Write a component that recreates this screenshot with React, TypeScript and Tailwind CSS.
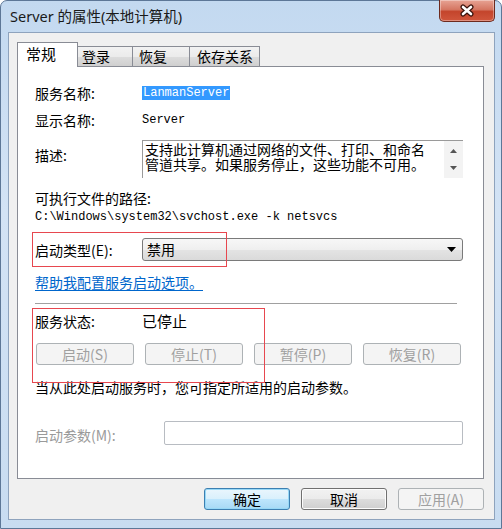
import type { ReactNode } from "react";

function DisabledButton({ children }: { children: ReactNode }) {
  return (
    <div className="flex h-[22px] items-center justify-center rounded-[3px] border border-[#adb2b5] bg-[#f4f4f4] text-[14px] leading-none text-[#a0a0a0]">
      {children}
    </div>
  );
}

function Row({ label, children, labelClass = "" }: { label: string; children: ReactNode; labelClass?: string }) {
  return (
    <div className="flex h-[16px] items-center">
      <div className={`w-[107px] shrink-0 text-[14px] leading-[16px] ${labelClass}`}>{label}</div>
      {children}
    </div>
  );
}

export default function App() {
  return (
    <div className="flex h-[529px] w-[502px] flex-col rounded-t-[7px] border border-[#5d7797] bg-[linear-gradient(#c3d9f0,#d3e3f5_40%,#c8dcf1)] pb-[8px] pl-[7px] pr-[6px] font-['Noto_Sans','Noto_Sans_CJK_SC',sans-serif] text-black">
      {/* title bar */}
      <div className="flex h-[31px] shrink-0 items-start justify-between">
        <div className="ml-[2px] mt-[6px] text-[14.5px] leading-[18px] text-[#1a1a1a]">Server 的属性(本地计算机)</div>
        <div className="-mt-px flex h-[22px] w-[56px] items-center justify-center rounded-b-[5px] border border-t-0 border-[#6d2a1e] bg-[linear-gradient(#e7a394,#d57763_45%,#c4452c_55%,#d0563c)] shadow-[inset_0_0_0_1px_rgba(255,255,255,0.35)]">
          <svg width="18" height="13" viewBox="0 0 18 13">
            <path d="M5 3 L13 10 M13 3 L5 10" stroke="#3b130c" strokeWidth="5" strokeLinecap="round" />
            <path d="M5 3 L13 10 M13 3 L5 10" stroke="#ffffff" strokeWidth="2.6" strokeLinecap="round" />
          </svg>
        </div>
      </div>

      {/* client area */}
      <div className="flex flex-1 flex-col border border-[#8ea3bd] bg-[#f0f0f0] pl-[8px] pr-[10px] pt-[9px] font-['Noto_Sans_CJK_SC',sans-serif]">
        {/* tabs */}
        <div className="relative z-10 -mb-px flex h-[25px] items-end text-[14px]">
          <div className="flex h-[25px] w-[61px] items-center border border-b-0 border-[#898c95] bg-white pb-[2px] pl-[8px] text-[15px]">常规</div>
          <div className="flex h-[21px] w-[55px] items-center border border-l-0 border-[#898c95] bg-[linear-gradient(#f2f2f2,#ebebeb_50%,#dddddd_50%,#cfcfcf)] pl-[4px]">登录</div>
          <div className="flex h-[21px] w-[57px] items-center border border-l-0 border-[#898c95] bg-[linear-gradient(#f2f2f2,#ebebeb_50%,#dddddd_50%,#cfcfcf)] pl-[6px]">恢复</div>
          <div className="flex h-[21px] w-[70px] items-center border border-l-0 border-[#898c95] bg-[linear-gradient(#f2f2f2,#ebebeb_50%,#dddddd_50%,#cfcfcf)] pl-[7px]">依存关系</div>
        </div>

        {/* panel */}
        <div className="relative flex h-[413px] flex-col border border-[#898c95] bg-white pl-[17px] pr-[20px] pt-[18px]">
          <Row label="服务名称:">
            <span className="bg-[#3399ff] px-px font-['Liberation_Mono',monospace] text-[12px] leading-[14px] text-white">LanmanServer</span>
          </Row>
          <div className="mt-[11px]">
            <Row label="显示名称:">
              <span className="font-['Liberation_Mono',monospace] text-[12px]">Server</span>
            </Row>
          </div>

          <div className="mt-[12px] flex h-[38px]">
            <div className="w-[107px] shrink-0 pt-[7px] text-[14px] leading-[16px]">描述:</div>
            <div className="flex flex-1 border-l border-t border-[#9a9a9a]">
              <div className="flex-1 pl-[2px] pt-[1px] text-[14px] leading-[15px]">
                <div>支持此计算机通过网络的文件、打印、和命名</div>
                <div>管道共享。如果服务停止，这些功能不可用。</div>
              </div>
              <div className="flex w-[19px] flex-col items-center justify-between bg-[#f3f3f3] py-[8px]">
                <svg width="7" height="4" viewBox="0 0 7 4"><path d="M0 4 L3.5 0 L7 4 Z" fill="#555" /></svg>
                <svg width="7" height="4" viewBox="0 0 7 4"><path d="M0 0 L3.5 4 L7 0 Z" fill="#555" /></svg>
              </div>
            </div>
          </div>

          <div className="mt-[12px] h-[16px] text-[14px] leading-[16px]">可执行文件的路径:</div>
          <div className="mt-[3px] h-[16px] font-['Liberation_Mono',monospace] text-[12px] leading-[16px]">
            C:\Windows\system32\svchost.exe -k netsvcs
          </div>

          <div className="mt-[13px] flex h-[23px] items-center">
            <div className="w-[107px] shrink-0 text-[14px] leading-[16px]">启动类型(E):</div>
            <div className="flex h-[23px] flex-1 items-center justify-between rounded-[3px] border border-[#7a7a7a] bg-[linear-gradient(#f7f7f7,#efefef_50%,#e4e4e4_50%,#dadada)] pl-[4px] pr-[6px] text-[14px]">
              <span>禁用</span>
              <svg width="9" height="5" viewBox="0 0 9 5"><path d="M0 0 L9 0 L4.5 5 Z" fill="#000" /></svg>
            </div>
          </div>

          <div className="mt-[13px] h-[16px] text-[14px] leading-[16px] text-[#0066cc] underline underline-offset-2">帮助我配置服务启动选项。</div>

          <div className="mt-[13px] h-[2px] w-[422px] border-b border-t border-b-white border-t-[#a0a0a0]" />

          <div className="mt-[8px]">
            <Row label="服务状态:">
              <span className="text-[15px]">已停止</span>
            </Row>
          </div>

          <div className="ml-px mt-[14px] grid w-[425px] grid-cols-4 gap-[11px]">
            <DisabledButton>启动(S)</DisabledButton>
            <DisabledButton>停止(T)</DisabledButton>
            <DisabledButton>暂停(P)</DisabledButton>
            <DisabledButton>恢复(R)</DisabledButton>
          </div>

          <div className="mt-[14px] h-[16px] text-[14px] leading-[16px]">当从此处启动服务时，您可指定所适用的启动参数。</div>

          <div className="mt-[26px] flex h-[24px] items-center">
            <div className="w-[129px] shrink-0 pt-[3px] text-[14px] leading-[16px] text-[#9a9a9a]">启动参数(M):</div>
            <div className="h-[24px] flex-1 rounded-[2px] border border-[#b8bcc2] bg-white" />
          </div>

          {/* annotation boxes */}
          <div className="absolute left-[14px] top-[165px] h-[35px] w-[195px] border border-[#e7474f]" />
          <div className="absolute left-[14px] top-[241px] h-[75px] w-[233px] border border-[#e7474f]" />
        </div>

        {/* dialog buttons */}
        <div className="mt-[9px] flex justify-end gap-[11px] text-[14px]">
          <div className="flex h-[22px] w-[86px] items-center justify-center rounded-[3px] border border-[#3c7fb1] bg-[linear-gradient(#eaf6fd,#d9f0fc_50%,#bee6fd_50%,#a7d9f5)] shadow-[inset_0_0_0_1px_#97d8f7]">确定</div>
          <div className="flex h-[22px] w-[86px] items-center justify-center rounded-[3px] border border-[#707070] bg-[linear-gradient(#f2f2f2,#ebebeb_50%,#dddddd_50%,#cfcfcf)] shadow-[inset_0_0_0_1px_#fcfcfc]">取消</div>
          <div className="flex h-[22px] w-[86px] items-center justify-center rounded-[3px] border border-[#adb2b5] bg-[#f4f4f4] text-[#a0a0a0]">应用(A)</div>
        </div>
      </div>
    </div>
  );
}
